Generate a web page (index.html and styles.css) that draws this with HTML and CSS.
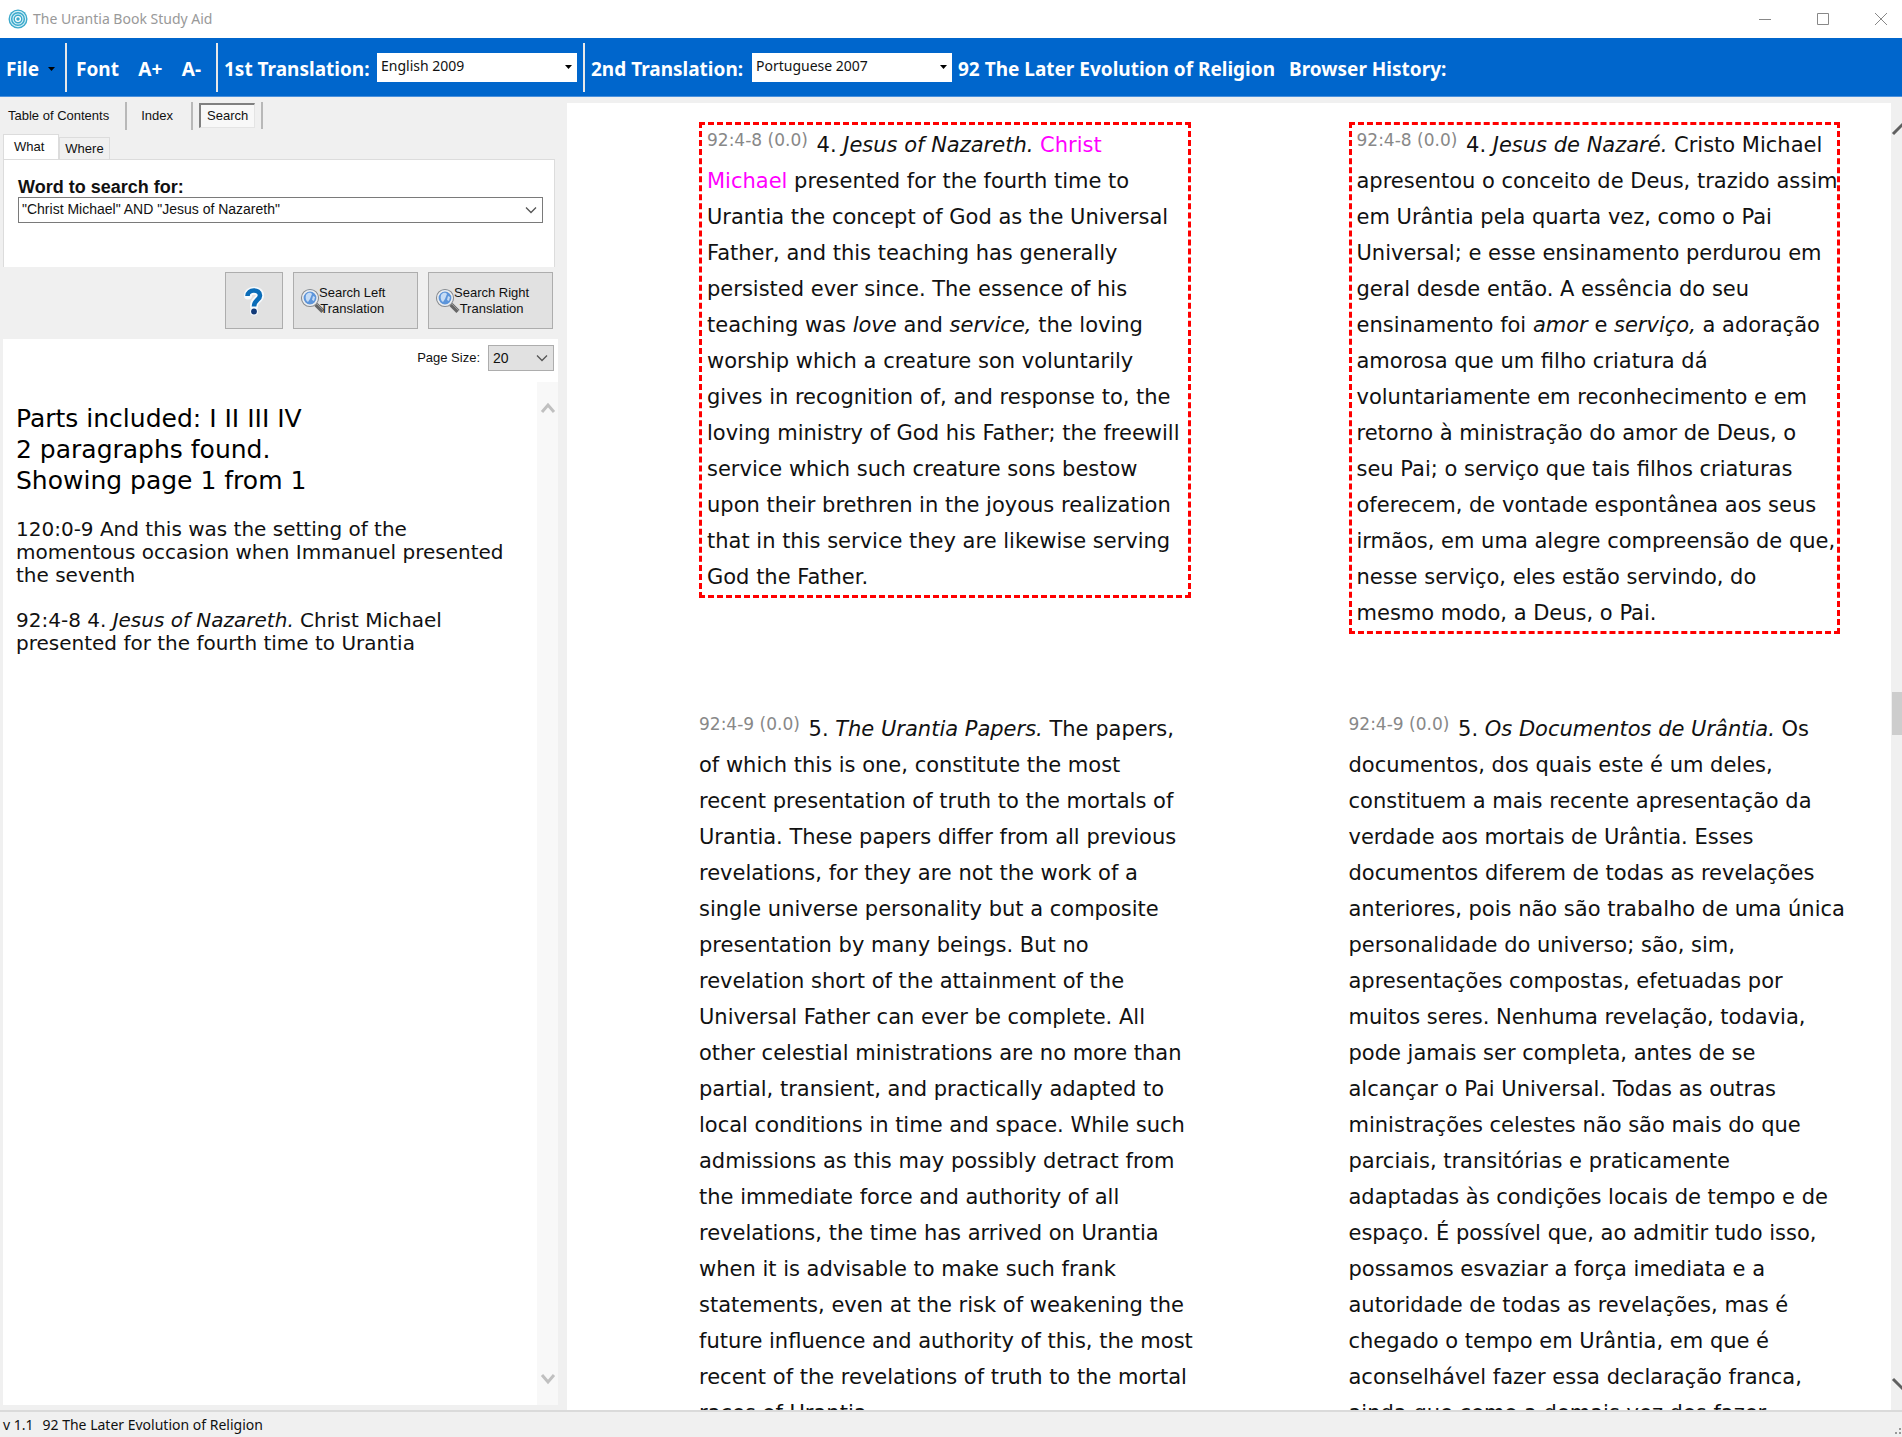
FILE: index.html
```html
<!DOCTYPE html>
<html lang="en">
<head>
<meta charset="utf-8">
<title>The Urantia Book Study Aid</title>
<link rel="stylesheet" href="styles.css">
</head>
<body>
<div class="window">
  <header class="titlebar">
    <svg class="app-icon" width="20" height="20" viewBox="0 0 20 20" aria-hidden="true">
      <circle cx="10" cy="10" r="9.5" fill="#3ba9cb"/>
      <circle cx="10" cy="10" r="7.6" fill="none" stroke="#d6f0f8" stroke-width="1.1"/>
      <circle cx="10" cy="10" r="5" fill="none" stroke="#d6f0f8" stroke-width="1.1"/>
      <circle cx="10" cy="10" r="2.4" fill="#3ba9cb" stroke="#fff" stroke-width="1.3"/>
    </svg>
    <h1 class="app-title">The Urantia Book Study Aid</h1>
    <div class="window-buttons">
      <button class="window-button" type="button" aria-label="Minimize"><svg width="14" height="14" viewBox="0 0 14 14"><path d="M1 7.500H13" stroke="#888" fill="none"/></svg></button>
      <button class="window-button" type="button" aria-label="Maximize"><svg width="14" height="14" viewBox="0 0 14 14"><path d="M1.500 1.500h11v11h-11z" stroke="#888" fill="none"/></svg></button>
      <button class="window-button" type="button" aria-label="Close"><svg width="14" height="14" viewBox="0 0 14 14"><path d="M1 1l12 12M13 1L1 13" stroke="#888" fill="none"/></svg></button>
    </div>
  </header>

  <div class="toolbar">
    <button class="tool file-menu" type="button">File <svg width="7" height="4" viewBox="0 0 7 4" aria-hidden="true"><path d="M0 0h7L3.500 4z" fill="#000"/></svg></button>
    <span class="divider"></span>
    <div class="font-tools">
      <span>Font</span>
      <button class="tool" type="button">A+</button>
      <button class="tool" type="button">A-</button>
    </div>
    <span class="divider"></span>
    <div class="translation">
      <label for="first">1st Translation:</label>
      <span class="picker">
        <select id="first"><option>English 2009</option></select>
        <svg class="picker-arrow" width="7" height="4" viewBox="0 0 7 4" aria-hidden="true"><path d="M0 0h7L3.500 4z" fill="#000"/></svg>
      </span>
    </div>
    <span class="divider"></span>
    <div class="translation translation-second">
      <label for="second">2nd Translation:</label>
      <span class="picker">
        <select id="second"><option>Portuguese 2007</option></select>
        <svg class="picker-arrow" width="7" height="4" viewBox="0 0 7 4" aria-hidden="true"><path d="M0 0h7L3.500 4z" fill="#000"/></svg>
      </span>
    </div>
    <div class="crumbs"><span>92 The Later Evolution of Religion</span><span>Browser History:</span></div>
  </div>

  <main class="workspace">
    <aside class="sidebar">
      <nav class="views">
        <button class="view" type="button">Table of Contents</button>
        <button class="view" type="button">Index</button>
        <button class="view view-active" type="button">Search</button>
      </nav>
      <div class="tabs">
        <button class="tab tab-active" type="button">What</button>
        <button class="tab" type="button">Where</button>
      </div>
      <section class="query">
        <label class="query-label" for="word">Word to search for:</label>
        <div class="combo">
          <input id="word" type="text" value="&quot;Christ Michael&quot; AND &quot;Jesus of Nazareth&quot;">
          <button class="combo-open" type="button" aria-label="Show earlier searches"><svg width="12" height="8" viewBox="0 0 12 8"><path d="M1 1.500l5 5 5-5" fill="none" stroke="#555" stroke-width="1.300"/></svg></button>
        </div>
      </section>
      <div class="actions">
        <button class="action action-help" type="button" aria-label="Help">
          <svg width="24" height="30" viewBox="0 0 24 30">
            <g fill="none" stroke="#f6fafd" stroke-width="8" stroke-linecap="round"><path d="M6 9.500C6 3.500 18 3 18 9.500C18 14 12 13.500 12 20M12 25.500v.1"/></g>
            <path d="M5.500 10C5.500 3 18 2.500 18 9.500C18 14 12 13.500 12 20.500" fill="none" stroke="#0a6cb8" stroke-width="4.600"/>
            <circle cx="12" cy="25.500" r="2.900" fill="#123a78"/>
          </svg>
        </button>
        <button class="action" type="button">
          <svg class="lens" width="26" height="26" viewBox="0 0 26 26"><path d="M16 16.500l7 7" stroke="#666" stroke-width="4.500"/><path d="M17 16l7 7" stroke="#999" stroke-width="1"/><circle cx="10" cy="10" r="8.500" fill="#5d95da" stroke="#8d8d8d" stroke-width="1.200"/><circle cx="10" cy="10" r="7.200" fill="none" stroke="#eee" stroke-width="1.600"/><path d="M6 7c2-3 5-2.500 6-1l-2 5-2 3c-2-1-3-4-2-7zM13 8l2 1-1 4-2-1z" fill="#c6dcf5"/></svg>
          <span>Search Left<br>Translation</span>
        </button>
        <button class="action" type="button">
          <svg class="lens" width="26" height="26" viewBox="0 0 26 26"><path d="M16 16.500l7 7" stroke="#666" stroke-width="4.500"/><path d="M17 16l7 7" stroke="#999" stroke-width="1"/><circle cx="10" cy="10" r="8.500" fill="#5d95da" stroke="#8d8d8d" stroke-width="1.200"/><circle cx="10" cy="10" r="7.200" fill="none" stroke="#eee" stroke-width="1.600"/><path d="M6 7c2-3 5-2.500 6-1l-2 5-2 3c-2-1-3-4-2-7zM13 8l2 1-1 4-2-1z" fill="#c6dcf5"/></svg>
          <span>Search Right<br>Translation</span>
        </button>
      </div>
      <section class="results">
        <div class="page-size">
          <label for="size">Page Size:</label>
          <span class="picker picker-gray">
            <select id="size"><option>20</option></select>
            <svg class="picker-arrow" width="12" height="8" viewBox="0 0 12 8" aria-hidden="true"><path d="M1 1.500l5 5 5-5" fill="none" stroke="#555" stroke-width="1.300"/></svg>
          </span>
        </div>
        <div class="results-body">
          <div class="results-text">
            <p class="summary">Parts included: I II III IV<br>2 paragraphs found.<br>Showing page 1 from 1</p>
            <p class="hit">120:0-9 And this was the setting of the<br>momentous occasion when Immanuel presented<br>the seventh</p>
            <p class="hit">92:4-8 4. <em>Jesus of Nazareth.</em> Christ Michael<br>presented for the fourth time to Urantia</p>
          </div>
          <div class="results-scroll">
            <svg width="16" height="12" viewBox="0 0 16 12" aria-hidden="true"><path d="M2 10l6-7 6 7" fill="none" stroke="#c0c0c0" stroke-width="3"/></svg>
            <svg width="16" height="12" viewBox="0 0 16 12" aria-hidden="true"><path d="M2 2l6 7 6-7" fill="none" stroke="#c0c0c0" stroke-width="3"/></svg>
          </div>
        </div>
      </section>
    </aside>

    <div class="reader">
      <div class="verses">
        <p class="verse verse-current"><span class="ref">92:4-8 (0.0)</span> 4. <em>Jesus of Nazareth.</em> <span class="match">Christ<br>Michael</span> presented for the fourth time to<br>Urantia the concept of God as the Universal<br>Father, and this teaching has generally<br>persisted ever since. The essence of his<br>teaching was <em>love</em> and <em>service,</em> the loving<br>worship which a creature son voluntarily<br>gives in recognition of, and response to, the<br>loving ministry of God his Father; the freewill<br>service which such creature sons bestow<br>upon their brethren in the joyous realization<br>that in this service they are likewise serving<br>God the Father.</p>
        <p class="verse verse-current" lang="pt"><span class="ref">92:4-8 (0.0)</span> 4. <em>Jesus de Nazaré.</em> Cristo Michael<br>apresentou o conceito de Deus, trazido assim<br>em Urântia pela quarta vez, como o Pai<br>Universal; e esse ensinamento perdurou em<br>geral desde então. A essência do seu<br>ensinamento foi <em>amor</em> e <em>serviço,</em> a adoração<br>amorosa que um filho criatura dá<br>voluntariamente em reconhecimento e em<br>retorno à ministração do amor de Deus, o<br>seu Pai; o serviço que tais filhos criaturas<br>oferecem, de vontade espontânea aos seus<br>irmãos, em uma alegre compreensão de que,<br>nesse serviço, eles estão servindo, do<br>mesmo modo, a Deus, o Pai.</p>
        <p class="verse"><span class="ref">92:4-9 (0.0)</span> 5. <em>The Urantia Papers.</em> The papers,<br>of which this is one, constitute the most<br>recent presentation of truth to the mortals of<br>Urantia. These papers differ from all previous<br>revelations, for they are not the work of a<br>single universe personality but a composite<br>presentation by many beings. But no<br>revelation short of the attainment of the<br>Universal Father can ever be complete. All<br>other celestial ministrations are no more than<br>partial, transient, and practically adapted to<br>local conditions in time and space. While such<br>admissions as this may possibly detract from<br>the immediate force and authority of all<br>revelations, the time has arrived on Urantia<br>when it is advisable to make such frank<br>statements, even at the risk of weakening the<br>future influence and authority of this, the most<br>recent of the revelations of truth to the mortal<br>races of Urantia.</p>
        <p class="verse" lang="pt"><span class="ref">92:4-9 (0.0)</span> 5. <em>Os Documentos de Urântia.</em> Os<br>documentos, dos quais este é um deles,<br>constituem a mais recente apresentação da<br>verdade aos mortais de Urântia. Esses<br>documentos diferem de todas as revelações<br>anteriores, pois não são trabalho de uma única<br>personalidade do universo; são, sim,<br>apresentações compostas, efetuadas por<br>muitos seres. Nenhuma revelação, todavia,<br>pode jamais ser completa, antes de se<br>alcançar o Pai Universal. Todas as outras<br>ministrações celestes não são mais do que<br>parciais, transitórias e praticamente<br>adaptadas às condições locais de tempo e de<br>espaço. É possível que, ao admitir tudo isso,<br>possamos esvaziar a força imediata e a<br>autoridade de todas as revelações, mas é<br>chegado o tempo em Urântia, em que é<br>aconselhável fazer essa declaração franca,<br>ainda que como a demais vez dos fazer</p>
      </div>
      <div class="reader-scroll">
        <svg width="22" height="16" viewBox="0 0 22 16" aria-hidden="true"><path d="M2 13l9-9 9 9" fill="none" stroke="#606060" stroke-width="3"/></svg>
        <div class="reader-thumb"></div>
        <svg width="22" height="16" viewBox="0 0 22 16" aria-hidden="true"><path d="M2 3l9 9 9-9" fill="none" stroke="#606060" stroke-width="3"/></svg>
      </div>
    </div>
  </main>

  <footer class="status">
    <span>v 1.1</span><span>92 The Later Evolution of Religion</span>
    <svg class="grip" width="8" height="14" viewBox="0 0 8 14" aria-hidden="true"><path d="M1 9h2v2H1zM5 9h2v2H5zM5 5h2v2H5z" fill="#999"/></svg>
  </footer>
</div>
</body>
</html>
```
FILE: styles.css
```css
* { box-sizing: border-box; }

body {
  margin: 0;
  background: #f0f0f0;
  color: #111;
  font: 13px/16px "Liberation Sans", Arial, sans-serif;
}

button, input, select {
  margin: 0;
  border: 0;
  padding: 0;
  border-radius: 0;
  background: none;
  color: inherit;
  font: inherit;
}

p { margin: 0; }

.window {
  display: flex;
  flex-direction: column;
  height: 100vh;
  overflow: hidden;
}

/* Title bar */
.titlebar {
  display: flex;
  flex: none;
  align-items: center;
  height: 38px;
  padding-left: 8px;
  gap: 5px;
  background: #fff;
}

.app-title {
  margin: 0;
  color: #999;
  font: 14px/20px "Noto Sans", sans-serif;
}

.window-buttons {
  display: flex;
  margin: 0 -8px 0 auto;
}

.window-button {
  display: grid;
  place-items: center;
  width: 58px;
  height: 38px;
}

/* Toolbar */
.toolbar {
  display: flex;
  flex: none;
  align-items: center;
  height: 59px;
  padding: 0 6px;
  border-bottom: 1px solid #4a90dc;
  background: #0066cc;
  color: #fff;
  font: bold 19px/24px "Noto Sans", sans-serif;
  white-space: nowrap;
}

.tool,
.font-tools span,
.translation label,
.crumbs { padding-top: 3px; }

.divider {
  flex: none;
  width: 2px;
  height: 49px;
  background: #e8e8e8;
}

.file-menu {
  display: flex;
  align-items: center;
  justify-content: space-between;
  width: 59px;
  padding-right: 10px;
}

.font-tools {
  display: flex;
  justify-content: space-between;
  width: 149px;
  padding: 0 15px 0 9px;
}

.translation {
  display: flex;
  align-items: center;
  justify-content: space-between;
  width: 365px;
  padding: 0 6px;
}

.translation-second { width: 373px; }

.crumbs {
  display: flex;
  gap: 14px;
}

.picker {
  display: grid;
  align-items: center;
  background: #fff;
  color: #111;
}

.picker select,
.picker-arrow { grid-area: 1 / 1; }

.picker select {
  width: 200px;
  height: 29px;
  padding: 0 4px 2px;
  appearance: none;
  font: 14px/20px "Noto Sans", sans-serif;
}

.picker-arrow {
  justify-self: end;
  margin-right: 5px;
  pointer-events: none;
}

/* Sidebar */
.workspace {
  display: flex;
  flex: 1;
  min-height: 0;
}

.sidebar {
  display: flex;
  flex: none;
  flex-direction: column;
  width: 567px;
  padding: 4px 9px 5px 3px;
}

.views {
  display: flex;
  flex: none;
  height: 30px;
  padding-top: 1px;
}

.view {
  height: 28px;
  margin-right: 6px;
  padding: 0 16px 0 5px;
  border-right: 2px solid #b8b8b8;
}

.view + .view { padding: 0 18px 0 8px; }

.view + .view-active {
  height: 25px;
  margin: 1px 0 0;
  padding: 0 6px;
  border: 1px solid #e4e4e4;
  border-top: 2px solid #808080;
  border-left: 2px solid #808080;
  background: #f8f8f8;
}

.views::after {
  width: 2px;
  height: 27px;
  margin-left: 6px;
  background: #b8b8b8;
  content: "";
}

.tabs {
  display: flex;
  flex: none;
  align-items: flex-end;
  height: 28px;
  padding-top: 3px;
}

.tab {
  height: 22px;
  padding: 0 5px;
  border: 1px solid #dcdcdc;
  border-bottom: 0;
}

.tab-active {
  height: 25px;
  padding: 0 14px 0 10px;
  background: #fff;
}

.query {
  flex: none;
  height: 108px;
  margin-right: 3px;
  padding: 18px 11px 0 14px;
  border: 1px solid #dcdcdc;
  border-bottom: 0;
  background: #fff;
}

.query-label {
  display: block;
  font: bold 18px/19px "Liberation Sans", Arial, sans-serif;
}

.combo {
  display: flex;
  height: 26px;
  border: 1px solid #7a7a7a;
}

.combo input {
  flex: 1;
  min-width: 0;
  padding: 0 3px 2px;
  font-size: 14px;
  outline: 0;
}

.combo-open {
  display: grid;
  place-items: center;
  width: 22px;
}

.actions {
  display: flex;
  flex: none;
  justify-content: flex-end;
  gap: 10px;
  padding: 5px 5px 10px 0;
}

.action {
  display: flex;
  align-items: center;
  width: 125px;
  height: 57px;
  padding-left: 6px;
  border: 1px solid #adadad;
  background: #e1e1e1;
}

.action-help {
  justify-content: center;
  width: 58px;
  padding: 0;
}

.lens {
  flex: none;
  margin-right: -7px;
}

.results {
  display: flex;
  flex: 1;
  flex-direction: column;
  min-height: 0;
  background: #fff;
}

.page-size {
  display: flex;
  flex: none;
  align-items: center;
  justify-content: flex-end;
  gap: 8px;
  height: 43px;
  padding: 0 4px 6px 0;
}

.picker-gray {
  border: 1px solid #adadad;
  background: #e1e1e1;
}

.picker-gray select {
  width: 64px;
  height: 24px;
  padding: 0 4px;
  font: 14px/20px "Liberation Sans", Arial, sans-serif;
}

.results-body {
  display: flex;
  flex: 1;
  min-height: 0;
  font-family: "DejaVu Sans", Verdana, sans-serif;
}

.results-text {
  flex: 1;
  min-width: 0;
  padding: 21px 0 0 13px;
  overflow: hidden;
  white-space: nowrap;
}

.summary { font-size: 25px; line-height: 31px; color: #000; }

.hit {
  margin-top: 22px;
  font-size: 20px;
  line-height: 23px;
}

.results-scroll {
  display: flex;
  flex: none;
  flex-direction: column;
  align-items: center;
  justify-content: space-between;
  width: 21px;
  padding: 20px 0;
  background: #f8f8f8;
}

/* Reading pane */
.reader {
  display: flex;
  flex: 1;
  min-width: 0;
  margin-top: 6px;
  background: #fff;
}

.verses {
  display: grid;
  flex: 1;
  grid-template-columns: 1fr 1fr;
  align-content: start;
  align-items: start;
  gap: 77px 158px;
  min-width: 0;
  padding: 19px 51px 0 132px;
  overflow: hidden;
}

.verse {
  min-width: 0;
  font: 21px/36px "DejaVu Sans", Verdana, sans-serif;
  white-space: nowrap;
}

.verse-current {
  padding: 2px 5px 0;
  border: 3px dashed #f00;
}

.ref {
  margin-right: 2px;
  color: #888;
  font-size: 17px;
  line-height: 0;
  vertical-align: 6px;
}

.match { color: #f0f; }

.reader-scroll {
  display: flex;
  flex: none;
  flex-direction: column;
  align-items: flex-start;
  justify-content: space-between;
  width: 11px;
  padding: 18px 0;
  overflow: hidden;
  background: #f0f0f0;
}

.reader-thumb {
  width: 10px;
  height: 43px;
  margin-bottom: 86px;
  align-self: flex-end;
  background: #cdcdcd;
}

/* Status bar */
.status {
  display: flex;
  flex: none;
  align-items: center;
  gap: 9px;
  height: 27px;
  padding-left: 3px;
  border-top: 2px solid #dadada;
  font: 14px/20px "Noto Sans", sans-serif;
}

.grip { margin-left: auto; align-self: flex-end; }
```
